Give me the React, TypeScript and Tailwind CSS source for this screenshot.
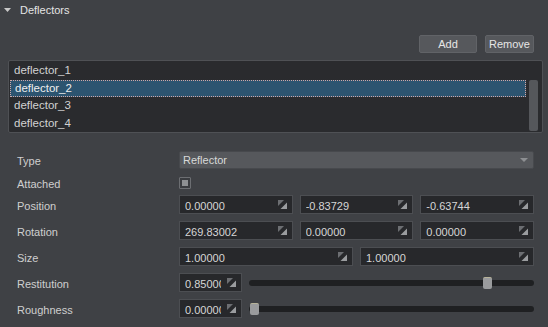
import React from 'react'

const font = { fontFamily: '"Liberation Sans", Arial, sans-serif' }

const SpinIcon = () => (
    <svg width="9" height="9" viewBox="0 0 9 9" className="shrink-0">
        <polygon points="0,0 6,0 0,6" fill="#6c6e72" />
        <polygon points="9,2.5 9,9 2.5,9" fill="#9a9c9f" />
    </svg>
)

const NumField = ({ value, className = '' }: { value: string; className?: string }) => (
    <div className={`h-[19px] flex items-center bg-[#27282b] border border-[#4c4e52] pl-[5px] pr-[5px] gap-[6px] ${className}`}>
        <span className="flex-1 overflow-hidden whitespace-nowrap text-[#d6d6d6] pt-[3px] leading-[13px]">{value}</span>
        <SpinIcon />
    </div>
)

const Slider = ({ pos }: { pos: number }) => (
    <div className="flex-1 relative h-[19px] flex items-center">
        <div className="w-full h-[6px] rounded-full bg-[#1f2022]" />
        <div
            className="absolute top-[4px] w-[9px] h-[12px] rounded-[2px] bg-[#9a9b9d] border-t border-[#b7b39a]"
            style={{ left: `${pos}%` }}
        />
    </div>
)

const Row = ({ label, children, className = '' }: { label: string; children: React.ReactNode; className?: string }) => (
    <div className={`flex items-center h-[19px] ${className}`}>
        <div className="w-[179px] shrink-0 pl-[17px] pt-[3px] leading-[13px] text-[#cfcfcf]">{label}</div>
        <div className="flex-1 flex items-center">{children}</div>
    </div>
)

const App = () => {
    const items = ['deflector_1', 'deflector_2', 'deflector_3', 'deflector_4']
    return (
        <div className="w-[548px] h-[327px] bg-[#3f4145] text-[11px] text-[#d6d6d6] overflow-hidden" style={font}>
            {/* header */}
            <div className="h-[19px] flex items-center pl-[4px] gap-[9px]">
                <svg width="7" height="4" viewBox="0 0 7 4"><polygon points="0,0 7,0 3.5,4" fill="#c9c9c9" /></svg>
                <span className="text-[#e4e4e4] pt-[1px]">Deflectors</span>
            </div>

            {/* buttons */}
            <div className="flex justify-end gap-[8px] pr-[14px] mt-[16px]">
                <button className="w-[58px] h-[18px] rounded-[2px] bg-[#56585c] border border-[#616367] text-[#e6e6e6]">Add</button>
                <button className="w-[49px] h-[18px] rounded-[2px] bg-[#56585c] border border-[#616367] text-[#e6e6e6]">Remove</button>
            </div>

            {/* list */}
            <div className="ml-[8px] mr-[5px] mt-[7px] h-[73px] bg-[#2a2b2e] border border-[#4f5155] rounded-[2px] flex pt-[1px]">
                <div className="flex-1 flex flex-col pl-[1px] pr-[3px]">
                    {items.map((it, i) => (
                        <div
                            key={it}
                            className={`h-[17.5px] flex items-center pl-[4px] text-[11.5px] ${i === 1 ? 'bg-[#2c5470] border border-dotted border-[#cfa7a7] text-[#eeeeee]' : 'text-[#d2d2d2]'}`}
                        >
                            {it}
                        </div>
                    ))}
                </div>
                <div className="w-[9px] mr-[4px] flex flex-col pt-[18px] pb-[1px]">
                    <div className="flex-1 rounded-[2px] bg-[#55575b]" />
                </div>
            </div>

            {/* properties */}
            <div className="flex flex-col pr-[14px] mt-[17px]">
                <Row label="Type">
                    <div className="flex-1 h-[18px] flex items-center justify-between bg-[#56585c] border border-[#47494d] rounded-[2px] pl-[3px] pr-[5px] text-[#d8d8d8]">
                        <span className="pt-[2px] leading-[13px]">Reflector</span>
                        <svg width="8" height="4" viewBox="0 0 8 4"><polygon points="0,0 8,0 4,4" fill="#8d8f92" /></svg>
                    </div>
                </Row>
                <Row label="Attached" className="mt-[4px]">
                    <div className="w-[12px] h-[12px] border border-[#6c6e72] rounded-[1px] bg-[#3a3c40] flex items-center justify-center">
                        <div className="w-[6px] h-[6px] bg-[#8e9093]" />
                    </div>
                </Row>
                <Row label="Position" className="mt-[3px]">
                    <div className="flex-1 grid grid-cols-3 gap-[7px]">
                        <NumField value="0.00000" />
                        <NumField value="-0.83729" />
                        <NumField value="-0.63744" />
                    </div>
                </Row>
                <Row label="Rotation" className="mt-[7px]">
                    <div className="flex-1 grid grid-cols-3 gap-[7px]">
                        <NumField value="269.83002" />
                        <NumField value="0.00000" />
                        <NumField value="0.00000" />
                    </div>
                </Row>
                <Row label="Size" className="mt-[7px]">
                    <div className="flex-1 grid grid-cols-2 gap-[7px]">
                        <NumField value="1.00000" />
                        <NumField value="1.00000" />
                    </div>
                </Row>
                <Row label="Restitution" className="mt-[7px]">
                    <NumField value="0.85000" className="w-[63px]" />
                    <div className="w-[7px]" />
                    <Slider pos={82} />
                </Row>
                <Row label="Roughness" className="mt-[7px]">
                    <NumField value="0.00000" className="w-[63px]" />
                    <div className="w-[7px]" />
                    <Slider pos={0.5} />
                </Row>
            </div>
        </div>
    )
}

export default App
